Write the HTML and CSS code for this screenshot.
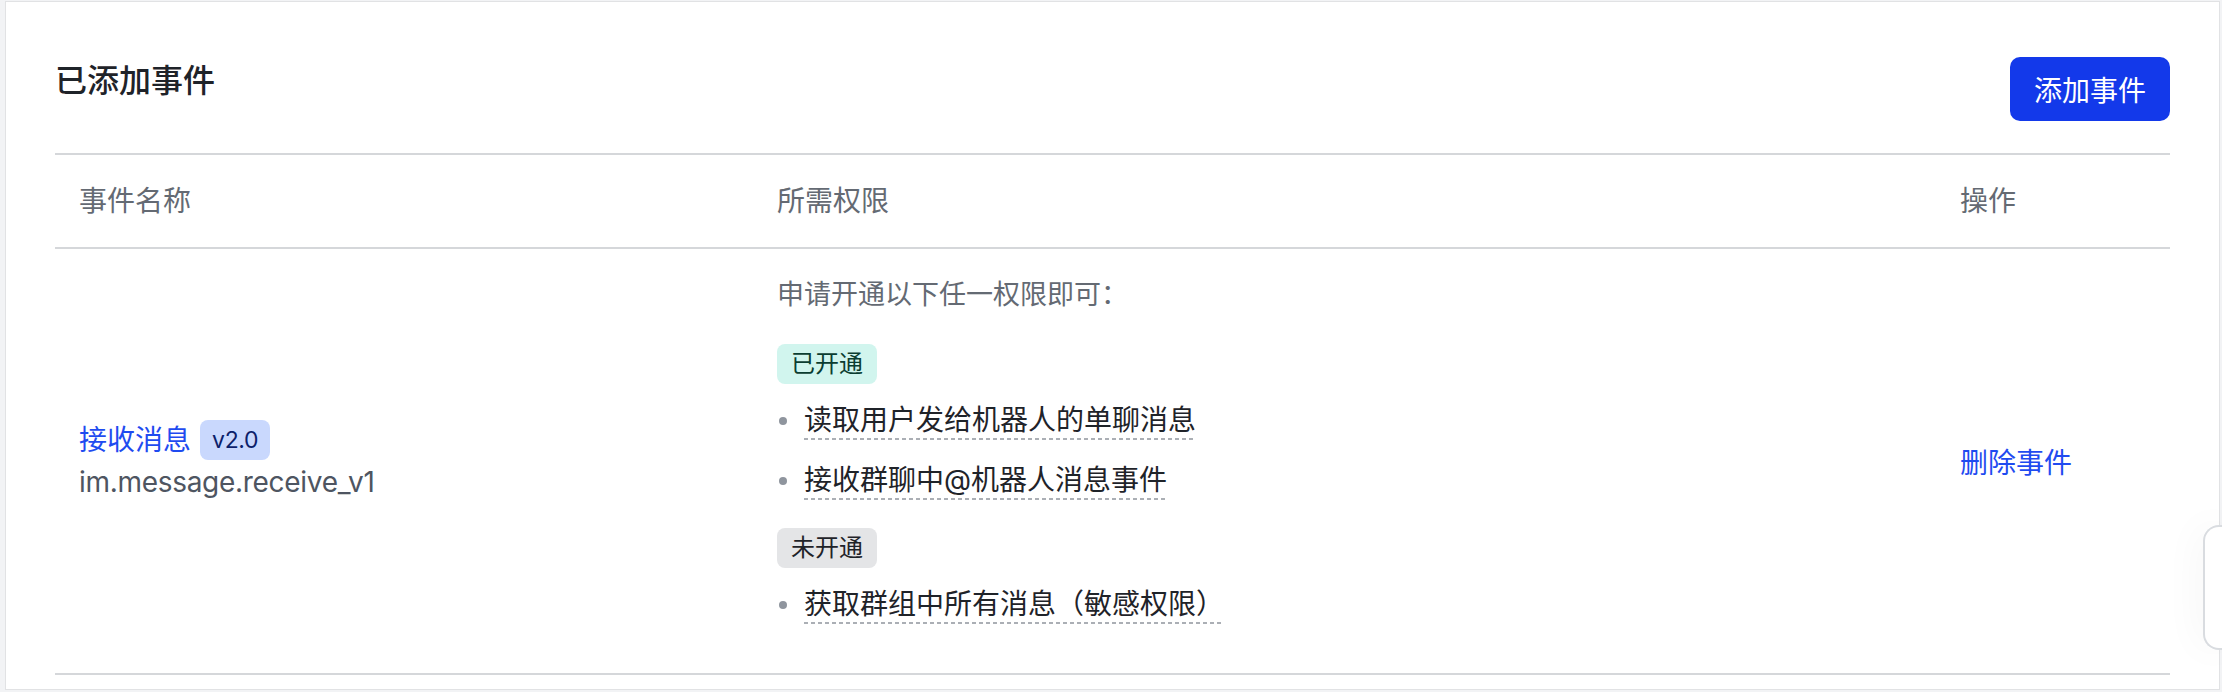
FILE: index.html
```html
<!DOCTYPE html>
<html lang="zh-CN">
<head>
  <meta charset="UTF-8">
  <title>已添加事件</title>
  <link rel="stylesheet" href="styles.css">
</head>
<body>
  <div class="card">
    <div class="card-header">
      <div class="card-title">已添加事件</div>
      <button class="add-button">添加事件</button>
    </div>

    <!-- event table -->
    <div class="event-table">
      <div class="table-row table-head">
        <div class="cell">事件名称</div>
        <div class="cell">所需权限</div>
        <div class="cell">操作</div>
      </div>

      <div class="table-row">
        <div class="cell cell-name">
          <div class="event-name">
            <a class="link" href="#">接收消息</a>
            <span class="version">v2.0</span>
          </div>
          <div class="event-key">im.message.receive_v1</div>
        </div>

        <div class="cell cell-perms">
          <div class="perm-intro">申请开通以下任一权限即可：</div>

          <div class="perm-group">
            <span class="tag tag-on">已开通</span>
            <ul class="perm-list">
              <li><span class="perm-text">读取用户发给机器人的单聊消息</span></li>
              <li><span class="perm-text">接收群聊中@机器人消息事件</span></li>
            </ul>
          </div>

          <div class="perm-group">
            <span class="tag tag-off">未开通</span>
            <ul class="perm-list">
              <li><span class="perm-text">获取群组中所有消息（敏感权限）</span></li>
            </ul>
          </div>
        </div>

        <div class="cell cell-action">
          <a class="link" href="#">删除事件</a>
        </div>
      </div>
    </div>
  </div>

  <div class="side-tab"></div>
</body>
</html>
```

FILE: styles.css
```css
body {
  margin: 0;
  background: #f2f3f5;
  font-family: "Inter", "Noto Sans CJK SC", sans-serif;
  color: #1f2329;
}

.card {
  margin: 1px 2px 1px 5px;
  padding: 0 49px 14px;
  background: #fff;
  border: 1px solid #e1e2e4;
}

.card-header {
  display: flex;
  justify-content: space-between;
  align-items: flex-start;
  padding-top: 55px;
}

.card-title {
  font-size: 32px;
  line-height: 48px;
  font-weight: 500;
  color: #1f2329;
}

.add-button {
  height: 64px;
  padding: 0 24px;
  font-family: inherit;
  font-size: 28px;
  color: #fff;
  background: #1339ea;
  border: none;
  border-radius: 10px;
  cursor: pointer;
}

.event-table {
  margin-top: 32px;
  border-top: 2px solid #d5d7da;
}

.table-row {
  display: grid;
  grid-template-columns: 698px 1183px 1fr;
  border-bottom: 2px solid #d5d7da;
}

.cell {
  padding: 0 24px;
}

.table-head .cell {
  padding-top: 26px;
  padding-bottom: 26px;
  font-size: 28px;
  line-height: 40px;
  color: #646a73;
}

.link {
  color: #1f4bf0;
  text-decoration: none;
}

.cell-name, .cell-action {
  display: flex;
  flex-direction: column;
  justify-content: center;
  font-size: 28px;
}

.event-name {
  display: flex;
  align-items: center;
  line-height: 40px;
}

.version {
  margin-left: 9px;
  padding: 0 12px;
  font-size: 23px;
  line-height: 40px;
  letter-spacing: -0.3px;
  color: #0c1f6b;
  background: #c9d8fd;
  border-radius: 8px;
}

.event-key {
  margin-top: 2px;
  line-height: 40px;
  letter-spacing: -0.3px;
  color: #4e5561;
}

.cell-perms {
  padding-top: 26px;
  padding-bottom: 49px;
}

.perm-intro {
  font-size: 27px;
  line-height: 40px;
  color: #646a73;
}

.perm-group {
  margin-top: 28px;
}

.perm-intro + .perm-group {
  margin-top: 29px;
}

.tag {
  display: inline-block;
  padding: 0 14px;
  font-size: 24px;
  line-height: 40px;
  border-radius: 8px;
}

.tag-on {
  color: #0b3d31;
  background: #d1f5ee;
}

.tag-off {
  color: #1f2329;
  background: #e4e5e7;
}

.perm-list {
  list-style: none;
  margin: 0;
  padding: 0;
}

.perm-list li {
  display: flex;
  align-items: center;
  margin-top: 18px;
  font-size: 28px;
}

.perm-list li + li {
  margin-top: 22px;
}

.perm-list li::before {
  content: "";
  width: 8px;
  height: 8px;
  margin: 0 17px 0 2px;
  border-radius: 50%;
  background: #8f959e;
}

.perm-text {
  line-height: 36px;
  padding-bottom: 2px;
  background: linear-gradient(to right, #abafb5 60%, transparent 0) left bottom / 7px 2px repeat-x;
}

.side-tab {
  position: fixed;
  top: 525px;
  right: 0;
  width: 17px;
  height: 121px;
  background: #fff;
  border: 2px solid #d9dce0;
  border-right: none;
  border-radius: 16px 0 0 16px;
  box-shadow: 0 0 40px rgba(0, 0, 0, 0.06);
}
```
